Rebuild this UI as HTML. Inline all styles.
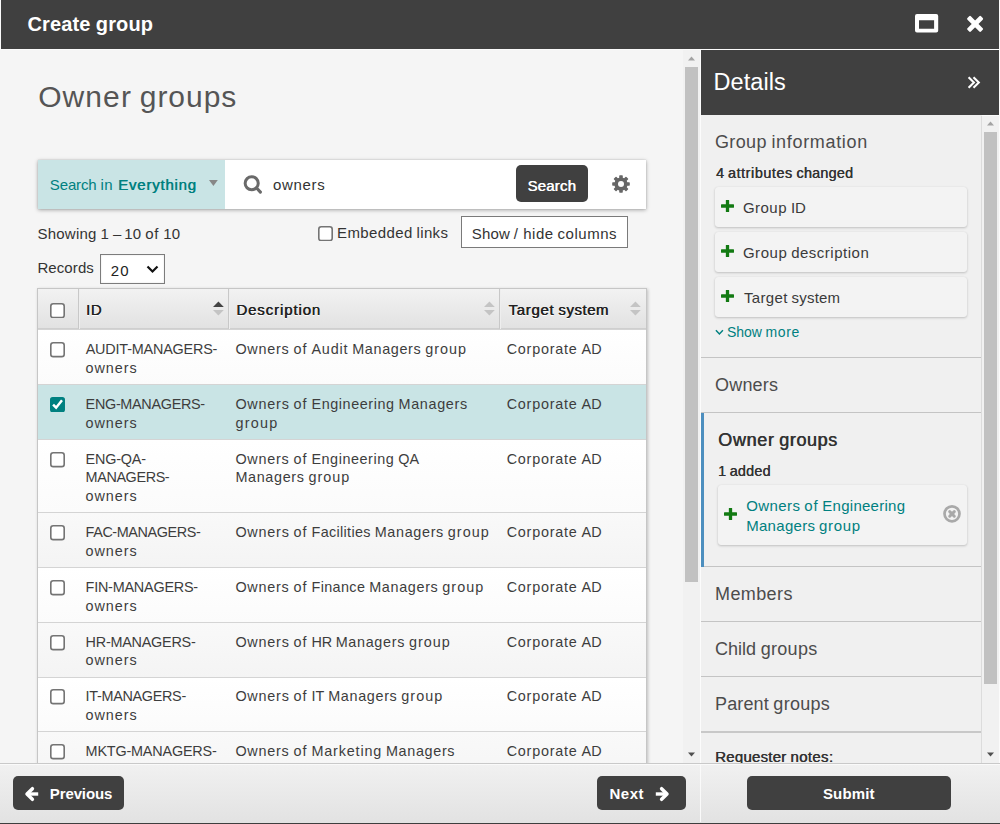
<!DOCTYPE html>
<html><head><meta charset="utf-8"><title>Create group</title>
<style>
*{box-sizing:border-box;margin:0;padding:0}
html,body{width:1000px;height:824px;overflow:hidden;background:#fbfbfb;font-family:"Liberation Sans",sans-serif;color:#333}
.a{position:absolute;white-space:nowrap}
.b{position:absolute}
#hdr{left:1px;top:0;width:998px;height:49px;background:#404040}
#L{left:1px;top:49px;width:682px;height:714px;overflow:hidden;background:#f5f5f5}
#R{left:701px;top:115px;width:281px;height:648px;overflow:hidden;background:#f0f0f0}
.cb{position:absolute;width:15px;height:15px;border:1.4px solid #777;border-radius:2.6px;background:#fff}
.card{position:absolute;background:#f3f3f3;border-radius:3px;box-shadow:0 1px 2.5px rgba(0,0,0,.2),0 0 1px rgba(0,0,0,.08)}
.hr{position:absolute;left:0;width:281px;height:1px;background:#c4c4c4}
.btn{position:absolute;background:#404040;border-radius:5px}
.row{position:absolute;left:1px;width:606px;border-top:1px solid #d4d4d4}
.vd{position:absolute;top:0;width:2px;height:40px;background:linear-gradient(90deg,#c8c8c8 50%,#eee 50%)}
</style></head><body>

<div class="b" id="hdr"></div>
<div class="b" style="left:0;top:50px;width:1px;height:713px;background:#f5f5f5"></div>
<svg class="b" style="left:914px;top:12px" width="26" height="22" viewBox="0 0 26 22"><path fill-rule="evenodd" fill="#fff" d="M3 1.9H22.2A2 2 0 0 1 24.2 3.9V18.6A2 2 0 0 1 22.2 20.6H3A2 2 0 0 1 1 18.6V3.9A2 2 0 0 1 3 1.9ZM5 8.2V16.8H20.1V8.2Z"/></svg>
<svg class="b" style="left:966px;top:15px" width="18" height="18" viewBox="0 0 18 18"><g fill="#fff" transform="translate(9.1 8.9)"><rect x="-9.6" y="-2.4" width="19.2" height="4.8" rx="1.2" transform="rotate(45)"/><rect x="-9.6" y="-2.4" width="19.2" height="4.8" rx="1.2" transform="rotate(-45)"/></g></svg>
<div class="b" id="L"><div class="b" style="left:-1px;top:0">
<div class="b" style="left:38px;top:111px;width:608px;height:49px;background:#fff;box-shadow:0 1px 4px rgba(0,0,0,.33),0 0 1px rgba(0,0,0,.2)"></div>
<div class="b" style="left:38px;top:111px;width:187px;height:49px;background:#c9e4e5"></div>
<svg class="b" style="left:208.5px;top:130.7px" width="9" height="6" viewBox="0 0 9 6"><path d="M0 0H8.8L4.4 6Z" fill="#878787"/></svg>
<svg class="b" style="left:243px;top:125px" width="20" height="20" viewBox="0 0 20 20"><circle cx="8.7" cy="9.2" r="6.55" fill="none" stroke="#6a6a6a" stroke-width="3"/><path d="M13.6 14L17.4 18.1" stroke="#6a6a6a" stroke-width="3.1" stroke-linecap="round"/></svg>
<div class="btn" style="left:516px;top:116.4px;width:72px;height:37px"></div>
<svg class="b" style="left:611.9px;top:125.6px" width="18" height="18" viewBox="-9 -9 18 18"><g fill="#666"><circle r="6.6"/><rect x="-1.8" y="-8.8" width="3.6" height="5" rx="0.7" transform="rotate(0)"/><rect x="-1.8" y="-8.8" width="3.6" height="5" rx="0.7" transform="rotate(45)"/><rect x="-1.8" y="-8.8" width="3.6" height="5" rx="0.7" transform="rotate(90)"/><rect x="-1.8" y="-8.8" width="3.6" height="5" rx="0.7" transform="rotate(135)"/><rect x="-1.8" y="-8.8" width="3.6" height="5" rx="0.7" transform="rotate(180)"/><rect x="-1.8" y="-8.8" width="3.6" height="5" rx="0.7" transform="rotate(225)"/><rect x="-1.8" y="-8.8" width="3.6" height="5" rx="0.7" transform="rotate(270)"/><rect x="-1.8" y="-8.8" width="3.6" height="5" rx="0.7" transform="rotate(315)"/></g><circle r="3" fill="#fbfbfb"/></svg>
<svg class="b" style="left:318px;top:176.5px" width="15" height="15.4" viewBox="0 0 15 15.4"><rect x="0.8" y="0.8" width="13.4" height="13.8" rx="2.4" fill="#fff" stroke="#747474" stroke-width="1.6"/></svg>
<div class="b" style="left:461px;top:167px;width:167px;height:32px;background:#fff;border:1px solid #7a7a7a"></div>
<div class="b" style="left:100px;top:205px;width:65px;height:30px;background:#fff;border:1px solid #7c7c7c;box-shadow:inset 0 0 2px rgba(0,0,0,.12)"></div>
<svg class="b" style="left:146.4px;top:216.3px" width="13" height="9" viewBox="0 0 13 9"><path d="M1.5 1.5L6.5 6.5L11.5 1.5" fill="none" stroke="#111" stroke-width="2.2"/></svg>
<div class="b" style="left:37px;top:239px;width:610px;height:520px;background:#fff;border:1px solid #c6c6c6;box-shadow:1px 1px 3px rgba(0,0,0,.22)">
<div class="b" style="left:0;top:0;width:608px;height:40px;background:linear-gradient(#f2f2f2,#e2e2e2);border-bottom:1px solid #cfcfcf"></div>
<div class="vd" style="left:40px"></div>
<div class="vd" style="left:190px"></div>
<div class="vd" style="left:461px"></div>
<div class="row" style="left:0;width:608px;top:40px;height:55px;background:linear-gradient(#fff,#fbfbfb)"></div>
<div class="row" style="left:0;width:608px;top:95px;height:55px;background:#c9e4e5"></div>
<div class="row" style="left:0;width:608px;top:150px;height:73px;background:linear-gradient(#fff,#fbfbfb)"></div>
<div class="row" style="left:0;width:608px;top:223px;height:55px;background:linear-gradient(#f9f9f9,#f4f4f4)"></div>
<div class="row" style="left:0;width:608px;top:278px;height:55px;background:linear-gradient(#fff,#fbfbfb)"></div>
<div class="row" style="left:0;width:608px;top:333px;height:55px;background:linear-gradient(#f9f9f9,#f4f4f4)"></div>
<div class="row" style="left:0;width:608px;top:388px;height:54px;background:linear-gradient(#fff,#fbfbfb)"></div>
<div class="row" style="left:0;width:608px;top:442px;height:69px;background:linear-gradient(#f9f9f9,#f4f4f4)"></div>
</div>
<svg class="b" style="left:212.6px;top:252px" width="11" height="15" viewBox="0 0 11 15"><path d="M0 6H10.8L5.4 0.4Z" fill="#444"/><path d="M0 8.9H10.8L5.4 14.6Z" fill="#c4c4c4"/></svg>
<svg class="b" style="left:484px;top:252px" width="11" height="15" viewBox="0 0 11 15"><path d="M0 6H10.8L5.4 0.4Z" fill="#c4c4c4"/><path d="M0 8.9H10.8L5.4 14.6Z" fill="#c4c4c4"/></svg>
<svg class="b" style="left:630.4px;top:252px" width="11" height="15" viewBox="0 0 11 15"><path d="M0 6H10.8L5.4 0.4Z" fill="#c4c4c4"/><path d="M0 8.9H10.8L5.4 14.6Z" fill="#c4c4c4"/></svg>
<svg class="b" style="left:50px;top:253.60000000000002px" width="15" height="15.4" viewBox="0 0 15 15.4"><rect x="0.8" y="0.8" width="13.4" height="13.8" rx="2.4" fill="#fff" stroke="#747474" stroke-width="1.6"/></svg>
<svg class="b" style="left:50px;top:293.2px" width="15" height="15.4" viewBox="0 0 15 15.4"><rect x="0.8" y="0.8" width="13.4" height="13.8" rx="2.4" fill="#fff" stroke="#747474" stroke-width="1.6"/></svg>
<svg class="b" style="left:50px;top:348px" width="15" height="15.4" viewBox="0 0 15 15.4"><rect x="0" y="0" width="15" height="15.4" rx="2.6" fill="#008080"/><path d="M3.1 7.6L6.1 10.7L12 3.2" fill="none" stroke="#fff" stroke-width="2.5"/></svg>
<svg class="b" style="left:50px;top:403.2px" width="15" height="15.4" viewBox="0 0 15 15.4"><rect x="0.8" y="0.8" width="13.4" height="13.8" rx="2.4" fill="#fff" stroke="#747474" stroke-width="1.6"/></svg>
<svg class="b" style="left:50px;top:476.20000000000005px" width="15" height="15.4" viewBox="0 0 15 15.4"><rect x="0.8" y="0.8" width="13.4" height="13.8" rx="2.4" fill="#fff" stroke="#747474" stroke-width="1.6"/></svg>
<svg class="b" style="left:50px;top:531.2px" width="15" height="15.4" viewBox="0 0 15 15.4"><rect x="0.8" y="0.8" width="13.4" height="13.8" rx="2.4" fill="#fff" stroke="#747474" stroke-width="1.6"/></svg>
<svg class="b" style="left:50px;top:586.2px" width="15" height="15.4" viewBox="0 0 15 15.4"><rect x="0.8" y="0.8" width="13.4" height="13.8" rx="2.4" fill="#fff" stroke="#747474" stroke-width="1.6"/></svg>
<svg class="b" style="left:50px;top:640.2px" width="15" height="15.4" viewBox="0 0 15 15.4"><rect x="0.8" y="0.8" width="13.4" height="13.8" rx="2.4" fill="#fff" stroke="#747474" stroke-width="1.6"/></svg>
<svg class="b" style="left:50px;top:695.2px" width="15" height="15.4" viewBox="0 0 15 15.4"><rect x="0.8" y="0.8" width="13.4" height="13.8" rx="2.4" fill="#fff" stroke="#747474" stroke-width="1.6"/></svg>
<div class="a" style="left:38.15px;top:29.00px;font-size:30px;line-height:38px;color:#555;"><span style="letter-spacing:1.098px">Owner</span><span style="letter-spacing:-0.590px"> </span><span style="letter-spacing:0.969px">groups</span></div>
<div class="a" style="left:49.80px;top:126.00px;font-size:15px;line-height:19px;color:#008080;"><span style="letter-spacing:-0.125px">Search</span><span style="letter-spacing:-0.337px"> </span><span style="letter-spacing:0.587px">in</span></div>
<div class="a" style="left:118.00px;top:126.00px;font-size:15px;line-height:19px;color:#008080;text-shadow:0.45px 0 0 currentColor;"><span style="letter-spacing:0.778px">Everything</span></div>
<div class="a" style="left:273.00px;top:126.00px;font-size:15px;line-height:19px;color:#333;"><span style="letter-spacing:0.680px">owners</span></div>
<div class="a" style="left:527.40px;top:127.00px;font-size:15px;line-height:19px;color:#fff;text-shadow:0.45px 0 0 currentColor;"><span style="letter-spacing:0.180px">Search</span></div>
<div class="a" style="left:37.40px;top:175.00px;font-size:15px;line-height:19px;color:#333;"><span style="letter-spacing:0.243px">Showing</span><span style="letter-spacing:-0.293px"> </span><span style="letter-spacing:0.194px">1</span><span style="letter-spacing:-0.293px"> </span><span style="letter-spacing:-0.878px">–</span><span style="letter-spacing:-0.293px"> </span><span style="letter-spacing:0.194px">10</span><span style="letter-spacing:-0.293px"> </span><span style="letter-spacing:0.782px">of</span><span style="letter-spacing:-0.293px"> </span><span style="letter-spacing:0.194px">10</span></div>
<div class="a" style="left:337.00px;top:174.00px;font-size:15px;line-height:19px;color:#333;"><span style="letter-spacing:0.382px">Embedded</span><span style="letter-spacing:-0.290px"> </span><span style="letter-spacing:0.352px">links</span></div>
<div class="a" style="left:471.80px;top:174.70px;font-size:15px;line-height:19px;color:#333;"><span style="letter-spacing:0.137px">Show</span><span style="letter-spacing:-0.291px"> </span><span style="letter-spacing:1.314px">/</span><span style="letter-spacing:-0.291px"> </span><span style="letter-spacing:0.548px">hide</span><span style="letter-spacing:-0.291px"> </span><span style="letter-spacing:0.508px">columns</span></div>
<div class="a" style="left:37.40px;top:209.00px;font-size:15px;line-height:19px;color:#333;"><span style="letter-spacing:0.100px">Records</span></div>
<div class="a" style="left:110.70px;top:211.80px;font-size:15px;line-height:19px;color:#222;"><span style="letter-spacing:1.100px">20</span></div>
<div class="a" style="left:85.90px;top:251.00px;font-size:15px;line-height:19px;color:#222;text-shadow:0.45px 0 0 currentColor,0 1px 0 #fff;"><span style="letter-spacing:0.600px">ID</span></div>
<div class="a" style="left:236.20px;top:251.00px;font-size:15px;line-height:19px;color:#222;text-shadow:0.45px 0 0 currentColor,0 1px 0 #fff;"><span style="letter-spacing:0.880px">Description</span></div>
<div class="a" style="left:508.40px;top:251.00px;font-size:15px;line-height:19px;color:#222;text-shadow:0.45px 0 0 currentColor,0 1px 0 #fff;"><span style="letter-spacing:0.676px">Target</span><span style="letter-spacing:-0.183px"> </span><span style="letter-spacing:0.536px">system</span></div>
<div class="a" style="left:85.70px;top:290.75px;font-size:14.4px;line-height:18px;color:#3d3d3d;"><span style="letter-spacing:-0.186px">AUDIT-MANAGERS-</span></div>
<div class="a" style="left:85.60px;top:309.75px;font-size:14.4px;line-height:18px;color:#3d3d3d;"><span style="letter-spacing:0.930px">owners</span></div>
<div class="a" style="left:235.40px;top:290.75px;font-size:14.4px;line-height:18px;color:#3d3d3d;"><span style="letter-spacing:0.758px">Owners</span><span style="letter-spacing:-0.116px"> </span><span style="letter-spacing:1.041px">of</span><span style="letter-spacing:-0.116px"> </span><span style="letter-spacing:0.823px">Audit</span><span style="letter-spacing:-0.116px"> </span><span style="letter-spacing:0.649px">Managers</span><span style="letter-spacing:-0.116px"> </span><span style="letter-spacing:0.984px">group</span></div>
<div class="a" style="left:506.70px;top:290.75px;font-size:14.4px;line-height:18px;color:#3d3d3d;"><span style="letter-spacing:0.763px">Corporate</span><span style="letter-spacing:-0.115px"> </span><span style="letter-spacing:0.184px">AD</span></div>
<div class="a" style="left:85.60px;top:345.75px;font-size:14.4px;line-height:18px;color:#3d3d3d;"><span style="letter-spacing:-0.300px">ENG-MANAGERS-</span></div>
<div class="a" style="left:85.60px;top:364.75px;font-size:14.4px;line-height:18px;color:#3d3d3d;"><span style="letter-spacing:0.930px">owners</span></div>
<div class="a" style="left:235.40px;top:345.75px;font-size:14.4px;line-height:18px;color:#3d3d3d;"><span style="letter-spacing:0.776px">Owners</span><span style="letter-spacing:-0.108px"> </span><span style="letter-spacing:1.055px">of</span><span style="letter-spacing:-0.108px"> </span><span style="letter-spacing:0.566px">Engineering</span><span style="letter-spacing:-0.108px"> </span><span style="letter-spacing:0.666px">Managers</span></div>
<div class="a" style="left:235.40px;top:364.75px;font-size:14.4px;line-height:18px;color:#3d3d3d;"><span style="letter-spacing:1.250px">group</span></div>
<div class="a" style="left:506.70px;top:345.75px;font-size:14.4px;line-height:18px;color:#3d3d3d;"><span style="letter-spacing:0.763px">Corporate</span><span style="letter-spacing:-0.115px"> </span><span style="letter-spacing:0.184px">AD</span></div>
<div class="a" style="left:85.60px;top:400.75px;font-size:14.4px;line-height:18px;color:#3d3d3d;"><span style="letter-spacing:-0.183px">ENG-QA-</span></div>
<div class="a" style="left:85.60px;top:418.75px;font-size:14.4px;line-height:18px;color:#3d3d3d;"><span style="letter-spacing:-0.388px">MANAGERS-</span></div>
<div class="a" style="left:85.60px;top:437.50px;font-size:14.4px;line-height:18px;color:#3d3d3d;"><span style="letter-spacing:0.930px">owners</span></div>
<div class="a" style="left:235.40px;top:400.75px;font-size:14.4px;line-height:18px;color:#3d3d3d;"><span style="letter-spacing:0.756px">Owners</span><span style="letter-spacing:-0.117px"> </span><span style="letter-spacing:1.039px">of</span><span style="letter-spacing:-0.117px"> </span><span style="letter-spacing:0.549px">Engineering</span><span style="letter-spacing:-0.117px"> </span><span style="letter-spacing:0.152px">QA</span></div>
<div class="a" style="left:235.40px;top:418.75px;font-size:14.4px;line-height:18px;color:#3d3d3d;"><span style="letter-spacing:0.650px">Managers</span><span style="letter-spacing:-0.115px"> </span><span style="letter-spacing:0.985px">group</span></div>
<div class="a" style="left:506.70px;top:400.75px;font-size:14.4px;line-height:18px;color:#3d3d3d;"><span style="letter-spacing:0.763px">Corporate</span><span style="letter-spacing:-0.115px"> </span><span style="letter-spacing:0.184px">AD</span></div>
<div class="a" style="left:85.60px;top:473.75px;font-size:14.4px;line-height:18px;color:#3d3d3d;"><span style="letter-spacing:-0.404px">FAC-MANAGERS-</span></div>
<div class="a" style="left:85.60px;top:492.75px;font-size:14.4px;line-height:18px;color:#3d3d3d;"><span style="letter-spacing:0.930px">owners</span></div>
<div class="a" style="left:235.40px;top:473.75px;font-size:14.4px;line-height:18px;color:#3d3d3d;"><span style="letter-spacing:0.778px">Owners</span><span style="letter-spacing:-0.108px"> </span><span style="letter-spacing:1.056px">of</span><span style="letter-spacing:-0.108px"> </span><span style="letter-spacing:0.322px">Facilities</span><span style="letter-spacing:-0.108px"> </span><span style="letter-spacing:0.667px">Managers</span><span style="letter-spacing:-0.108px"> </span><span style="letter-spacing:1.002px">group</span></div>
<div class="a" style="left:506.70px;top:473.75px;font-size:14.4px;line-height:18px;color:#3d3d3d;"><span style="letter-spacing:0.763px">Corporate</span><span style="letter-spacing:-0.115px"> </span><span style="letter-spacing:0.184px">AD</span></div>
<div class="a" style="left:85.60px;top:528.75px;font-size:14.4px;line-height:18px;color:#3d3d3d;"><span style="letter-spacing:-0.217px">FIN-MANAGERS-</span></div>
<div class="a" style="left:85.60px;top:547.75px;font-size:14.4px;line-height:18px;color:#3d3d3d;"><span style="letter-spacing:0.930px">owners</span></div>
<div class="a" style="left:235.40px;top:528.75px;font-size:14.4px;line-height:18px;color:#3d3d3d;"><span style="letter-spacing:0.766px">Owners</span><span style="letter-spacing:-0.113px"> </span><span style="letter-spacing:1.047px">of</span><span style="letter-spacing:-0.113px"> </span><span style="letter-spacing:0.379px">Finance</span><span style="letter-spacing:-0.113px"> </span><span style="letter-spacing:0.656px">Managers</span><span style="letter-spacing:-0.113px"> </span><span style="letter-spacing:0.991px">group</span></div>
<div class="a" style="left:506.70px;top:528.75px;font-size:14.4px;line-height:18px;color:#3d3d3d;"><span style="letter-spacing:0.763px">Corporate</span><span style="letter-spacing:-0.115px"> </span><span style="letter-spacing:0.184px">AD</span></div>
<div class="a" style="left:85.60px;top:583.75px;font-size:14.4px;line-height:18px;color:#3d3d3d;"><span style="letter-spacing:-0.236px">HR-MANAGERS-</span></div>
<div class="a" style="left:85.60px;top:602.25px;font-size:14.4px;line-height:18px;color:#3d3d3d;"><span style="letter-spacing:0.930px">owners</span></div>
<div class="a" style="left:235.40px;top:583.75px;font-size:14.4px;line-height:18px;color:#3d3d3d;"><span style="letter-spacing:0.773px">Owners</span><span style="letter-spacing:-0.110px"> </span><span style="letter-spacing:1.053px">of</span><span style="letter-spacing:-0.110px"> </span><span style="letter-spacing:-0.245px">HR</span><span style="letter-spacing:-0.110px"> </span><span style="letter-spacing:0.663px">Managers</span><span style="letter-spacing:-0.110px"> </span><span style="letter-spacing:0.997px">group</span></div>
<div class="a" style="left:506.70px;top:583.75px;font-size:14.4px;line-height:18px;color:#3d3d3d;"><span style="letter-spacing:0.763px">Corporate</span><span style="letter-spacing:-0.115px"> </span><span style="letter-spacing:0.184px">AD</span></div>
<div class="a" style="left:85.60px;top:637.75px;font-size:14.4px;line-height:18px;color:#3d3d3d;"><span style="letter-spacing:-0.305px">IT-MANAGERS-</span></div>
<div class="a" style="left:85.60px;top:656.75px;font-size:14.4px;line-height:18px;color:#3d3d3d;"><span style="letter-spacing:0.930px">owners</span></div>
<div class="a" style="left:235.40px;top:637.75px;font-size:14.4px;line-height:18px;color:#3d3d3d;"><span style="letter-spacing:0.775px">Owners</span><span style="letter-spacing:-0.109px"> </span><span style="letter-spacing:1.054px">of</span><span style="letter-spacing:-0.109px"> </span><span style="letter-spacing:-0.034px">IT</span><span style="letter-spacing:-0.109px"> </span><span style="letter-spacing:0.665px">Managers</span><span style="letter-spacing:-0.109px"> </span><span style="letter-spacing:0.999px">group</span></div>
<div class="a" style="left:506.70px;top:637.75px;font-size:14.4px;line-height:18px;color:#3d3d3d;"><span style="letter-spacing:0.763px">Corporate</span><span style="letter-spacing:-0.115px"> </span><span style="letter-spacing:0.184px">AD</span></div>
<div class="a" style="left:85.60px;top:692.75px;font-size:14.4px;line-height:18px;color:#3d3d3d;"><span style="letter-spacing:-0.181px">MKTG-MANAGERS-</span></div>
<div class="a" style="left:85.60px;top:711.75px;font-size:14.4px;line-height:18px;color:#3d3d3d;"><span style="letter-spacing:0.930px">owners</span></div>
<div class="a" style="left:235.40px;top:692.75px;font-size:14.4px;line-height:18px;color:#3d3d3d;"><span style="letter-spacing:0.762px">Owners</span><span style="letter-spacing:-0.114px"> </span><span style="letter-spacing:1.044px">of</span><span style="letter-spacing:-0.114px"> </span><span style="letter-spacing:0.832px">Marketing</span><span style="letter-spacing:-0.114px"> </span><span style="letter-spacing:0.652px">Managers</span></div>
<div class="a" style="left:235.40px;top:711.75px;font-size:14.4px;line-height:18px;color:#3d3d3d;"><span style="letter-spacing:1.250px">group</span></div>
<div class="a" style="left:506.70px;top:692.75px;font-size:14.4px;line-height:18px;color:#3d3d3d;"><span style="letter-spacing:0.763px">Corporate</span><span style="letter-spacing:-0.115px"> </span><span style="letter-spacing:0.184px">AD</span></div>
</div></div>
<div class="b" style="left:683px;top:50px;width:17px;height:713px;background:#f1f1f1"></div>
<div class="b" style="left:685px;top:67px;width:13px;height:515px;background:#c1c1c1"></div>
<svg class="b" style="left:688px;top:56px" width="7" height="5" viewBox="0 0 7 5"><path d="M0 4.5H7L3.5 0.5Z" fill="#a3a3a3"/></svg>
<svg class="b" style="left:688px;top:752px" width="7" height="5" viewBox="0 0 7 5"><path d="M0 0.5H7L3.5 4.5Z" fill="#505050"/></svg>
<div class="b" style="left:700px;top:49px;width:1px;height:775px;background:#fcfcfc"></div>
<div class="b" style="left:701px;top:50px;width:298px;height:65px;background:#404040"></div>
<svg class="b" style="left:967px;top:76px" width="15" height="13" viewBox="0 0 15 13"><path d="M1.6 1.3L6.9 6.55L1.6 11.8M6.5 1.3L11.8 6.55L6.5 11.8" fill="none" stroke="#fff" stroke-width="2.1"/></svg>
<div class="b" id="R">
<div class="card" style="left:13.5px;top:72px;width:252.5px;height:39.5px"></div>
<svg class="b" style="left:19.600000000000023px;top:85px" width="13" height="12" viewBox="0 0 13 12"><path d="M6.5 0.7V11.3M0.9 6H12.1" stroke="#127a12" stroke-width="3.3" stroke-linecap="round" stroke-dasharray="none"/></svg>
<div class="card" style="left:13.5px;top:117px;width:252.5px;height:39.5px"></div>
<svg class="b" style="left:19.600000000000023px;top:130px" width="13" height="12" viewBox="0 0 13 12"><path d="M6.5 0.7V11.3M0.9 6H12.1" stroke="#127a12" stroke-width="3.3" stroke-linecap="round" stroke-dasharray="none"/></svg>
<div class="card" style="left:13.5px;top:162px;width:252.5px;height:39.5px"></div>
<svg class="b" style="left:19.600000000000023px;top:175px" width="13" height="12" viewBox="0 0 13 12"><path d="M6.5 0.7V11.3M0.9 6H12.1" stroke="#127a12" stroke-width="3.3" stroke-linecap="round" stroke-dasharray="none"/></svg>
<svg class="b" style="left:14px;top:214px" width="9" height="7" viewBox="0 0 9 7"><path d="M0.9 1.3L4.4 4.9L7.9 1.3" fill="none" stroke="#008080" stroke-width="1.5"/></svg>
<div class="hr" style="top:242px"></div>
<div class="hr" style="top:297px"></div>
<div class="hr" style="top:451px"></div>
<div class="hr" style="top:506px"></div>
<div class="hr" style="top:561px"></div>
<div class="hr" style="top:616px;height:2px;background:#c8c8c8"></div>
<div class="b" style="left:0;top:298px;width:3px;height:153.5px;background:#4d8fbf"></div>
<div class="card" style="left:16.5px;top:370px;width:249.5px;height:60px"></div>
<svg class="b" style="left:22.700000000000045px;top:393px" width="13" height="12" viewBox="0 0 13 12"><path d="M6.5 0.7V11.3M0.9 6H12.1" stroke="#127a12" stroke-width="3.3" stroke-linecap="round" stroke-dasharray="none"/></svg>
<svg class="b" style="left:242px;top:390px" width="18" height="18" viewBox="0 0 18 18"><circle cx="9" cy="8.85" r="7.5" fill="none" stroke="#a9a9a9" stroke-width="2.7"/><path d="M6.7 6.6L11.3 11.2M11.3 6.6L6.7 11.2" stroke="#a9a9a9" stroke-width="3" stroke-linecap="round"/></svg>
<div class="a" style="left:14.00px;top:16.00px;font-size:18px;line-height:22px;color:#4c4c4c;"><span style="letter-spacing:0.359px">Group</span><span style="letter-spacing:-0.469px"> </span><span style="letter-spacing:0.684px">information</span></div>
<div class="a" style="left:15.00px;top:49.00px;font-size:14.4px;line-height:18px;color:#333;text-shadow:0.35px 0 0 currentColor;"><span style="letter-spacing:0.135px">4</span><span style="letter-spacing:-0.297px"> </span><span style="letter-spacing:0.559px">attributes</span><span style="letter-spacing:-0.297px"> </span><span style="letter-spacing:0.237px">changed</span></div>
<div class="a" style="left:41.90px;top:83.00px;font-size:15px;line-height:19px;color:#3a3a3a;"><span style="letter-spacing:0.488px">Group</span><span style="letter-spacing:-0.313px"> </span><span style="letter-spacing:-0.014px">ID</span></div>
<div class="a" style="left:41.90px;top:128.00px;font-size:15px;line-height:19px;color:#3a3a3a;"><span style="letter-spacing:0.536px">Group</span><span style="letter-spacing:-0.291px"> </span><span style="letter-spacing:0.506px">description</span></div>
<div class="a" style="left:42.90px;top:173.00px;font-size:15px;line-height:19px;color:#3a3a3a;"><span style="letter-spacing:0.364px">Target</span><span style="letter-spacing:-0.345px"> </span><span style="letter-spacing:0.190px">system</span></div>
<div class="a" style="left:26.00px;top:208.00px;font-size:14px;line-height:18px;color:#008080;"><span style="letter-spacing:-0.026px">Show</span><span style="letter-spacing:-0.331px"> </span><span style="letter-spacing:0.599px">more</span></div>
<div class="a" style="left:14.00px;top:258.50px;font-size:18px;line-height:22px;color:#4c4c4c;"><span style="letter-spacing:0.200px">Owners</span></div>
<div class="a" style="left:17.00px;top:314.00px;font-size:18px;line-height:22px;color:#333;text-shadow:0.6px 0 0 currentColor;"><span style="letter-spacing:0.662px">Owner</span><span style="letter-spacing:-0.346px"> </span><span style="letter-spacing:0.584px">groups</span></div>
<div class="a" style="left:17.00px;top:347.00px;font-size:14.4px;line-height:18px;color:#333;text-shadow:0.3px 0 0 currentColor;"><span style="letter-spacing:-0.055px">1</span><span style="letter-spacing:-0.384px"> </span><span style="letter-spacing:0.223px">added</span></div>
<div class="a" style="left:45.20px;top:381.00px;font-size:15px;line-height:19px;color:#008080;"><span style="letter-spacing:0.420px">Owners</span><span style="letter-spacing:-0.283px"> </span><span style="letter-spacing:0.800px">of</span><span style="letter-spacing:-0.283px"> </span><span style="letter-spacing:0.265px">Engineering</span></div>
<div class="a" style="left:45.20px;top:401.00px;font-size:15px;line-height:19px;color:#008080;"><span style="letter-spacing:0.293px">Managers</span><span style="letter-spacing:-0.296px"> </span><span style="letter-spacing:0.655px">group</span></div>
<div class="a" style="left:14.00px;top:468.00px;font-size:18px;line-height:22px;color:#4c4c4c;"><span style="letter-spacing:0.400px">Members</span></div>
<div class="a" style="left:14.00px;top:523.00px;font-size:18px;line-height:22px;color:#4c4c4c;"><span style="letter-spacing:0.029px">Child</span><span style="letter-spacing:-0.482px"> </span><span style="letter-spacing:0.298px">groups</span></div>
<div class="a" style="left:14.00px;top:578.00px;font-size:18px;line-height:22px;color:#4c4c4c;"><span style="letter-spacing:0.132px">Parent</span><span style="letter-spacing:-0.487px"> </span><span style="letter-spacing:0.289px">groups</span></div>
<div class="a" style="left:14.00px;top:632.00px;font-size:15px;line-height:19px;color:#333;text-shadow:0.45px 0 0 currentColor;"><span style="letter-spacing:0.235px">Requester</span><span style="letter-spacing:-0.288px"> </span><span style="letter-spacing:0.364px">notes:</span></div>
</div>
<div class="b" style="left:981px;top:116px;width:1px;height:647px;background:#dcdcdc"></div>
<div class="b" style="left:982px;top:116px;width:17px;height:647px;background:#f1f1f1"></div>
<div class="b" style="left:984px;top:132px;width:13px;height:552px;background:#c1c1c1"></div>
<svg class="b" style="left:987px;top:121px" width="7" height="5" viewBox="0 0 7 5"><path d="M0 4.5H7L3.5 0.5Z" fill="#a3a3a3"/></svg>
<svg class="b" style="left:987px;top:752px" width="7" height="5" viewBox="0 0 7 5"><path d="M0 0.5H7L3.5 4.5Z" fill="#505050"/></svg>
<div class="b" style="left:0;top:763px;width:1000px;height:61px;background:linear-gradient(#f1f1f1,#e2e2e2);border-top:1px solid #c9c9c9;border-bottom:1px solid #3e3e3e"></div>
<div class="b" style="left:0;top:764px;width:1000px;height:1px;background:#fafafa"></div>
<div class="b" style="left:700px;top:764px;width:1px;height:58px;background:#fafafa"></div>
<div class="btn" style="left:13px;top:776px;width:111px;height:34px"></div>
<div class="btn" style="left:597px;top:776px;width:89px;height:34px"></div>
<div class="btn" style="left:747px;top:776px;width:204px;height:34px"></div>
<svg class="b" style="left:24px;top:786px" width="16" height="16" viewBox="0 0 16 16"><path d="M14.2 8H4" fill="none" stroke="#fff" stroke-width="3.4"/><path d="M8.4 2.7L3 8L8.4 13.3" fill="none" stroke="#fff" stroke-width="3.5" stroke-linecap="round" stroke-linejoin="round"/></svg>
<svg class="b" style="left:654.4px;top:785.9px" width="16" height="16" viewBox="0 0 16 16"><path d="M1.8 8H12" fill="none" stroke="#fff" stroke-width="3.4"/><path d="M7.6 2.7L13 8L7.6 13.3" fill="none" stroke="#fff" stroke-width="3.5" stroke-linecap="round" stroke-linejoin="round"/></svg>
<div class="a" style="left:27.40px;top:12.00px;font-size:20px;line-height:25px;color:#fff;font-weight:700;"><span style="letter-spacing:0.131px">Create</span><span style="letter-spacing:-0.228px"> </span><span style="letter-spacing:0.132px">group</span></div>
<div class="a" style="left:713.40px;top:68.00px;font-size:23.5px;line-height:29px;color:#fff;"><span style="letter-spacing:0.100px">Details</span></div>
<div class="a" style="left:49.80px;top:784.00px;font-size:15px;line-height:19px;color:#fff;font-weight:700;"><span style="letter-spacing:-0.114px">Previous</span></div>
<div class="a" style="left:609.40px;top:784.00px;font-size:15px;line-height:19px;color:#fff;font-weight:700;"><span style="letter-spacing:0.533px">Next</span></div>
<div class="a" style="left:823.00px;top:784.00px;font-size:15px;line-height:19px;color:#fff;font-weight:700;"><span style="letter-spacing:0.120px">Submit</span></div>
<div class="b" style="left:0;top:49px;width:1000px;height:1px;background:#fbfbfb"></div>
</body></html>
